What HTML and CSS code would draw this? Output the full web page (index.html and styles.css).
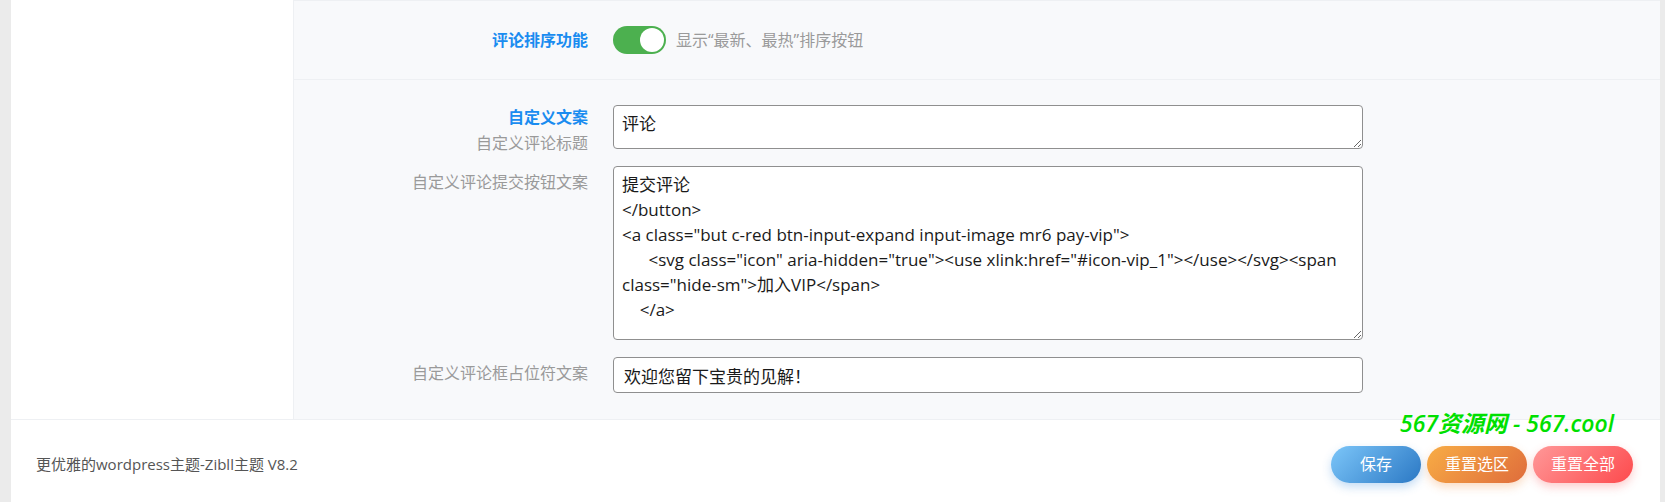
FILE: index.html
```html
<!DOCTYPE html>
<html lang="zh-CN">
<head>
<meta charset="utf-8">
<title>Zibll 主题设置 - 评论</title>
<link rel="stylesheet" href="styles.css">
</head>
<body>
<div class="app">
  <div class="main">
    <aside class="sidebar"></aside>
    <section class="content">
      <div class="row row-switch">
        <div class="row-label"><span class="title">评论排序功能</span></div>
        <div class="switch-field">
          <span class="switch"><span class="knob"></span></span>
          <span class="help">显示“最新、最热”排序按钮</span>
        </div>
      </div>
      <div class="row row-fields">
        <div class="sub">
          <div class="sub-label first">
            <div class="title">自定义文案</div>
            <div class="subtitle">自定义评论标题</div>
          </div>
          <textarea class="ta ta-small">评论</textarea>
        </div>
        <div class="sub">
          <div class="sub-label">自定义评论提交按钮文案</div>
          <textarea class="ta ta-large">提交评论
&lt;/button&gt;
&lt;a class="but c-red btn-input-expand input-image mr6 pay-vip"&gt;
      &lt;svg class="icon" aria-hidden="true"&gt;&lt;use xlink:href="#icon-vip_1"&gt;&lt;/use&gt;&lt;/svg&gt;&lt;span class="hide-sm"&gt;加入VIP&lt;/span&gt;
    &lt;/a&gt;</textarea>
        </div>
        <div class="sub">
          <div class="sub-label">自定义评论框占位符文案</div>
          <input class="text-input" type="text" value="欢迎您留下宝贵的见解！">
        </div>
      </div>
    </section>
  </div>
  <footer class="footer">
    <div class="copy">更优雅的wordpress主题-Zibll主题 V8.2</div>
    <div class="actions">
      <button class="btn btn-save" type="button">保存</button>
      <button class="btn btn-reset-section" type="button">重置选区</button>
      <button class="btn btn-reset-all" type="button">重置全部</button>
    </div>
    <div class="watermark">567资源网 - 567.cool</div>
  </footer>
</div>
</body>
</html>
```
FILE: styles.css
```css
* {
  box-sizing: border-box;
}

html,
body {
  margin: 0;
  padding: 0;
}

body {
  width: 1665px;
  height: 502px;
  overflow: hidden;
  background: #ebebeb;
  font-family: "Open Sans", "Noto Sans CJK SC", sans-serif;
}

.app {
  margin-left: 11px;
  width: 1649px;
  height: 502px;
  display: flex;
  flex-direction: column;
  background: #fff;
}

.main {
  display: flex;
  height: 419px;
}

.sidebar {
  width: 283px;
  background: #fff;
  border-right: 1px solid #eef0f3;
}

.content {
  flex: 1;
  background: #f8f9fb;
  border-top: 1px solid #eef0f3;
}

.row {
  border-bottom: 1px solid #eef0f3;
}

.row-switch {
  display: grid;
  grid-template-columns: 294px 1fr;
  column-gap: 25px;
  align-items: center;
  padding: 25px 0;
}

.row-label {
  text-align: right;
  line-height: 24px;
}

.title {
  color: #1a8cf0;
  font-size: 16px;
  font-weight: 700;
  line-height: 24px;
}

.switch-field {
  display: flex;
  align-items: center;
}

.switch {
  display: flex;
  justify-content: flex-end;
  align-items: center;
  width: 53px;
  height: 28px;
  padding: 2px;
  border-radius: 14px;
  background: #4cb04f;
}

.knob {
  width: 24px;
  height: 24px;
  border-radius: 50%;
  background: #fff;
}

.help {
  margin-left: 10px;
  color: #9a9a9a;
  font-size: 16px;
  line-height: 24px;
}

.row-fields {
  display: flex;
  flex-direction: column;
  gap: 17px;
  padding: 25px 0 26px;
  border-bottom: 0;
}

.sub {
  display: grid;
  grid-template-columns: 294px 750px;
  column-gap: 25px;
  align-items: start;
}

.sub-label {
  text-align: right;
  color: #9a9a9a;
  font-size: 16px;
  line-height: 24px;
  padding-top: 4px;
}

.sub-label.first {
  padding-top: 0;
  margin-bottom: -8px;
}

.subtitle {
  line-height: 28px;
}

.ta,
.text-input {
  display: block;
  width: 750px;
  margin: 0;
  border: 1px solid #8f8f8f;
  border-radius: 4px;
  background: #fff;
  color: #1a1a1a;
  font-family: "Open Sans", "Noto Sans CJK SC", sans-serif;
  font-size: 17px;
  line-height: 25px;
  outline: none;
}

.ta {
  padding: 5px 8px;
  resize: vertical;
  white-space: pre-wrap;
}

.ta-small {
  height: 44px;
}

.ta-large {
  height: 174px;
}

.text-input {
  height: 36px;
  padding: 0 10px;
}

.footer {
  position: relative;
  flex: 1;
  display: flex;
  justify-content: space-between;
  align-items: flex-start;
  padding: 26px 27px 0 25px;
  border-top: 1px solid #eef0f3;
  background: #fff;
}

.copy {
  color: #555;
  font-size: 15px;
  line-height: 37px;
}

.actions {
  display: flex;
  gap: 6px;
}

.btn {
  height: 37px;
  min-width: 90px;
  padding: 0 18px;
  border: 0;
  border-radius: 19px;
  color: #fff;
  font-family: "Open Sans", "Noto Sans CJK SC", sans-serif;
  font-size: 16px;
  line-height: 37px;
  cursor: pointer;
}

.btn-save {
  background: linear-gradient(135deg, #7cc6f9 0%, #2b78c4 100%);
  box-shadow: 0 4px 10px rgba(60, 140, 220, 0.3);
}

.btn-reset-section {
  background: linear-gradient(135deg, #f8ad45 0%, #df6c3b 100%);
  box-shadow: 0 4px 10px rgba(240, 140, 60, 0.3);
}

.btn-reset-all {
  background: linear-gradient(135deg, #ff9898 0%, #fd4a4d 100%);
  box-shadow: 0 4px 10px rgba(250, 90, 90, 0.3);
}

.watermark {
  position: absolute;
  top: -12px;
  right: 46px;
  color: #00e000;
  font-size: 23px;
  font-style: italic;
  font-weight: 600;
  line-height: 30px;
  white-space: nowrap;
}
```
